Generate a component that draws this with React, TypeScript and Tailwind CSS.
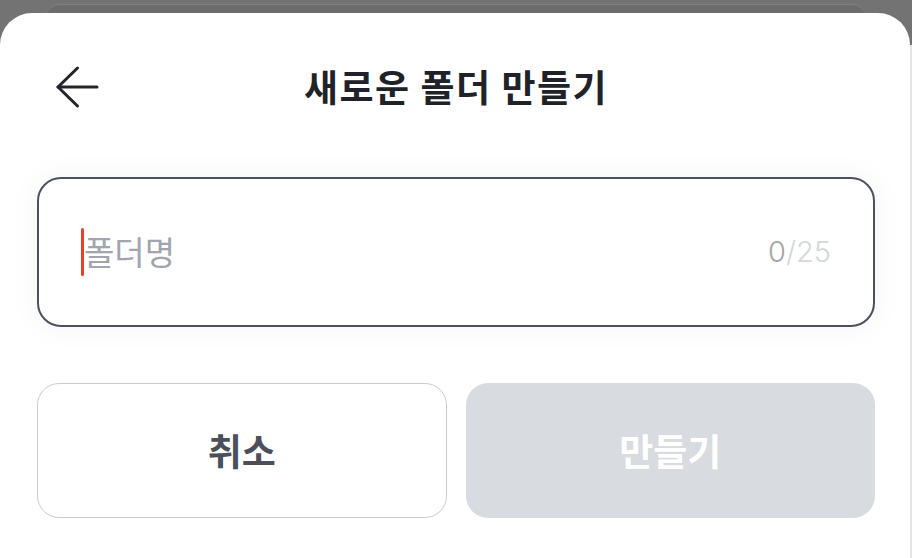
export default function App() {
  return (
    <div
      className="relative flex h-[558px] w-[912px] flex-col overflow-hidden bg-[#737373]"
      style={{ fontFamily: '"Noto Sans CJK KR", "Noto Sans", sans-serif' }}
    >
      {/* card peeking from behind the sheet */}
      <div className="absolute left-[45px] right-[45px] top-[4px] h-20 rounded-[14px] border border-[#808080] bg-[#6c6c6c]" />
      <div className="absolute bottom-0 right-0 top-[45px] w-[2px] bg-[#e6e6e6]" />

      <div className="relative mt-[13px] h-[545px] w-[910px] rounded-t-[32px] bg-white pl-[37px] pr-[35px] pt-[36px]">
        <header className="relative flex h-[76px] items-center justify-center">
          <button className="absolute left-[18px] top-[16px] text-[#222429]">
            <svg viewBox="0 0 44 44" className="h-[44px] w-[44px]" fill="none" stroke="currentColor" strokeWidth="3" strokeLinecap="round" strokeLinejoin="round">
              <path d="M3 22h39" />
              <path d="M22.5 3 3 22l19.5 19" />
            </svg>
          </button>
          <h1 className="text-[37px] font-semibold tracking-[1.5px] text-[#1f2228]">새로운 폴더 만들기</h1>
        </header>

        <div className="mt-[52px] flex h-[150px] items-center rounded-[24px] border-2 border-[#4b515d] bg-white px-[42px] shadow-[0_0_30px_rgba(0,0,0,0.05)]">
          <span className="h-[48px] w-[3px] rounded-full bg-[#e0452b]" />
          <span className="flex-1 text-[33px] text-[#a0a5ae]">폴더명</span>
          <span className="text-[29px] font-light text-[#a6a6a6]" style={{ fontFamily: 'Inter, sans-serif' }}>
            0<span className="text-[#d4d6da]">/25</span>
          </span>
        </div>

        <div className="mt-[56px] grid grid-cols-2 gap-[19px]">
          <button className="flex h-[135px] items-center justify-center rounded-[22px] border border-[#c8ccd2] bg-white text-[37px] font-bold text-[#4a4f59]">
            취소
          </button>
          <button className="flex h-[135px] items-center justify-center rounded-[22px] bg-[#d8dbe0] text-[37px] font-bold text-white">
            만들기
          </button>
        </div>
      </div>
    </div>
  );
}
